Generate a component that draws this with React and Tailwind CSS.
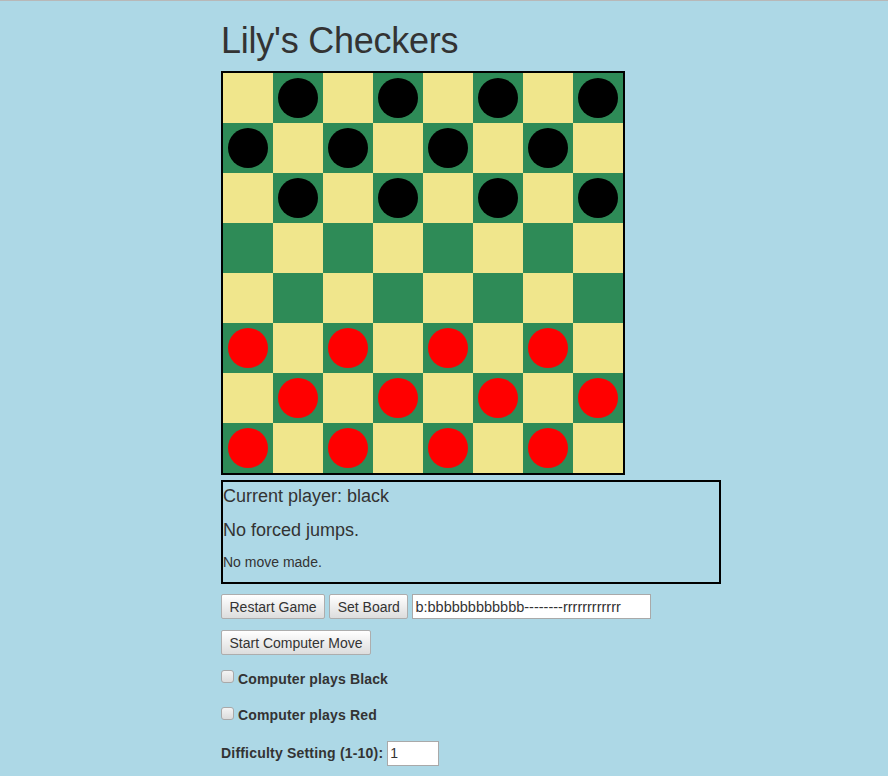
import React from 'react'

const START = 'bbbbbbbbbbbb--------rrrrrrrrrrrr'

function Square({ dark, piece }) {
  return (
    <div className={`w-[50px] h-[50px] flex items-center justify-center ${dark ? 'bg-[#2e8b57]' : 'bg-[#f0e68c]'}`}>
      {piece === 'b' && <div className="w-[40px] h-[40px] rounded-full bg-black" />}
      {piece === 'r' && <div className="w-[40px] h-[40px] rounded-full bg-[#ff0000]" />}
    </div>
  )
}

function Board({ layout }) {
  // layout holds the 32 playable squares, row by row
  const cells = []
  let k = 0
  for (let row = 0; row < 8; row++) {
    for (let col = 0; col < 8; col++) {
      const dark = (row + col) % 2 === 1
      const piece = dark ? layout[k++] : '-'
      cells.push(<Square key={`${row}-${col}`} dark={dark} piece={piece} />)
    }
  }
  return (
    <div className="grid grid-cols-[repeat(8,50px)] w-[404px] border-2 border-black">
      {cells}
    </div>
  )
}

function Button({ children }) {
  return (
    <button className="h-[25px] px-[7.5px] text-[14px] leading-none text-[#333] border border-[#adadad] rounded-[2px] bg-gradient-to-b from-[#ffffff] to-[#dddddd]">
      {children}
    </button>
  )
}

function Check({ label }) {
  return (
    <label className="flex items-center h-[20px] text-[14px] font-bold tracking-[0.15px] text-[#333]">
      <span className="w-[13px] h-[13px] mr-[4px] -mt-[5px] rounded-[3px] border border-[#a9a9a9] bg-gradient-to-b from-[#f4f4f4] to-[#dcdcdc]" />
      {label}
    </label>
  )
}

export default function App() {
  return (
    <div className="min-h-screen bg-[#add8e6] border-t border-[#b8b8b8] text-[#333] font-['Liberation_Sans',Arial,sans-serif]">
      <div className="pl-[221px]">
        <h1 className="mt-[20px] mb-[10px] text-[36px] leading-[40px] font-normal tracking-[-0.25px]">Lily's Checkers</h1>

        <Board layout={START} />

        <div className="mt-[5px] w-[500px] border-2 border-black">
          <h4 className="mt-[3.5px] text-[18px] leading-[20px] font-medium">Current player: black</h4>
          <h4 className="mt-[14px] text-[18px] leading-[20px] font-medium">No forced jumps.</h4>
          <p className="mt-[12px] mb-[10px] text-[14px] leading-[20px]">No move made.</p>
        </div>

        <div className="mt-[10.5px] flex gap-[4px]">
          <Button>Restart Game</Button>
          <Button>Set Board</Button>
          <input
            className="w-[239px] h-[25px] px-[2px] text-[14.5px] text-[#333] bg-white border border-[#a9a9a9] outline-none"
            defaultValue={'b:' + START}
          />
        </div>

        <div className="mt-[11px]">
          <Button>Start Computer Move</Button>
        </div>

        <div className="mt-[14px]">
          <Check label="Computer plays Black" />
        </div>
        <div className="mt-[16.5px]">
          <Check label="Computer plays Red" />
        </div>

        <div className="mt-[15px] flex items-center text-[14px] font-bold">
          <span className="tracking-[0.2px]">Difficulty Setting (1-10):</span>
          <input
            className="ml-[4px] w-[52px] h-[25px] px-[2px] text-[14px] font-normal text-[#333] bg-white border border-[#a9a9a9] outline-none"
            defaultValue="1"
          />
        </div>
      </div>
    </div>
  )
}
